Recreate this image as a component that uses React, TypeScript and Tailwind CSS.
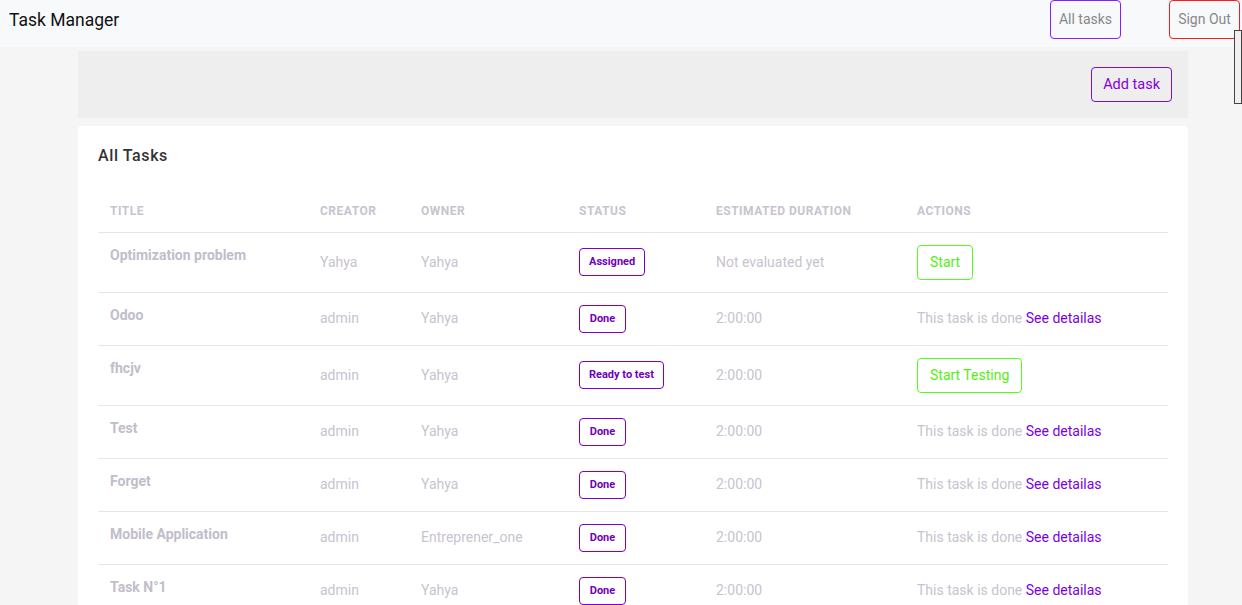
import React from 'react'

type Task = {
  title: string
  creator: string
  owner: string
  status: string
  duration: string
  action: 'start' | 'testing' | 'done'
  tall: boolean
}

const tasks: Task[] = [
  { title: 'Optimization problem', creator: 'Yahya', owner: 'Yahya', status: 'Assigned', duration: 'Not evaluated yet', action: 'start', tall: true },
  { title: 'Odoo', creator: 'admin', owner: 'Yahya', status: 'Done', duration: '2:00:00', action: 'done', tall: false },
  { title: 'fhcjv', creator: 'admin', owner: 'Yahya', status: 'Ready to test', duration: '2:00:00', action: 'testing', tall: true },
  { title: 'Test', creator: 'admin', owner: 'Yahya', status: 'Done', duration: '2:00:00', action: 'done', tall: false },
  { title: 'Forget', creator: 'admin', owner: 'Yahya', status: 'Done', duration: '2:00:00', action: 'done', tall: false },
  { title: 'Mobile Application', creator: 'admin', owner: 'Entreprener_one', status: 'Done', duration: '2:00:00', action: 'done', tall: false },
  { title: 'Task N°1', creator: 'admin', owner: 'Yahya', status: 'Done', duration: '2:00:00', action: 'done', tall: false },
]

const App = () => {
  return (
    <div className="min-h-screen bg-[#f5f5f5] font-['Roboto',sans-serif] relative">
      {/* navbar */}
      <nav className="h-[47px] bg-[#f8f9fb] flex items-start justify-between pl-[9px] pr-[2px]">
        <div className="text-[17.5px] text-[#111] pt-[7px]">Task Manager</div>
        <div className="flex">
          <button className="h-[39px] w-[71px] border border-[#8a1cff] rounded-[4px] text-[14px] text-[#888] mr-[48px]">All tasks</button>
          <button className="h-[39px] w-[71px] border border-[#ff1a1a] rounded-[4px] text-[14px] text-[#888]">Sign Out</button>
        </div>
      </nav>
      <div className="absolute right-0 top-[30px] w-[8px] h-[74px] border border-[#444] bg-[#f0f0f0]"></div>

      <div className="w-[1110px] ml-[78px] pt-[4px]">
        <div className="h-[67px] bg-[#eeeeee] flex items-center justify-end pr-[16px]">
          <button className="h-[35px] px-[11px] border border-[#7a0fd6] rounded-[4px] text-[14.5px] text-[#8500e0]">Add task</button>
        </div>

        <div className="mt-[8px] bg-white rounded-[4px] px-[20px] pt-[20px] pb-[20px]">
          <h2 className="text-[16px] font-medium tracking-[0.6px] text-[#333] leading-[20px]">All Tasks</h2>
          <table className="mt-[23px] w-full border-collapse text-left">
            <thead>
              <tr className="border-b border-[#e6e6e6]">
                <th className="w-[210px] px-[12px] pt-[2px] h-[43px] text-[12px] font-bold tracking-[0.5px] text-[#c8c3cf]">TITLE</th>
                <th className="w-[101px] px-[12px] pt-[2px] text-[12px] font-bold tracking-[0.5px] text-[#c8c3cf]">CREATOR</th>
                <th className="w-[158px] px-[12px] pt-[2px] text-[12px] font-bold tracking-[0.5px] text-[#c8c3cf]">OWNER</th>
                <th className="w-[137px] px-[12px] pt-[2px] text-[12px] font-bold tracking-[0.5px] text-[#c8c3cf]">STATUS</th>
                <th className="w-[201px] px-[12px] pt-[2px] text-[12px] font-bold tracking-[0.5px] text-[#c8c3cf]">ESTIMATED DURATION</th>
                <th className="px-[12px] pt-[2px] text-[12px] font-bold tracking-[0.5px] text-[#c8c3cf]">ACTIONS</th>
              </tr>
            </thead>
            <tbody>
              {tasks.map((t) => (
                <tr key={t.title} className={'border-b border-[#e6e6e6] text-[14px] text-[#c8c3cf] ' + (t.tall ? 'h-[60px]' : 'h-[53px]')}>
                  <td className="px-[12px] pt-[12px] align-top font-bold text-[#c2bdca] leading-[20px]">{t.title}</td>
                  <td className="px-[12px]">{t.creator}</td>
                  <td className="px-[12px]">{t.owner}</td>
                  <td className="px-[12px]">
                    <span className="inline-block h-[28px] leading-[26px] px-[9px] min-w-[47px] text-center border border-[#7b00cc] rounded-[4px] text-[11px] font-bold text-[#6f00bb]">{t.status}</span>
                  </td>
                  <td className="px-[12px]">{t.duration}</td>
                  <td className="px-[12px]">
                    {t.action === 'done' ? (
                      <span>This task is done <a className="text-[#7a00e6] cursor-pointer">See detailas</a></span>
                    ) : (
                      <button className="h-[35px] px-[12px] border border-[#4dff1a] rounded-[4px] text-[14px] text-[#55ee11]">
                        {t.action === 'start' ? 'Start' : 'Start Testing'}
                      </button>
                    )}
                  </td>
                </tr>
              ))}
            </tbody>
          </table>
        </div>
      </div>
    </div>
  )
}

export default App
